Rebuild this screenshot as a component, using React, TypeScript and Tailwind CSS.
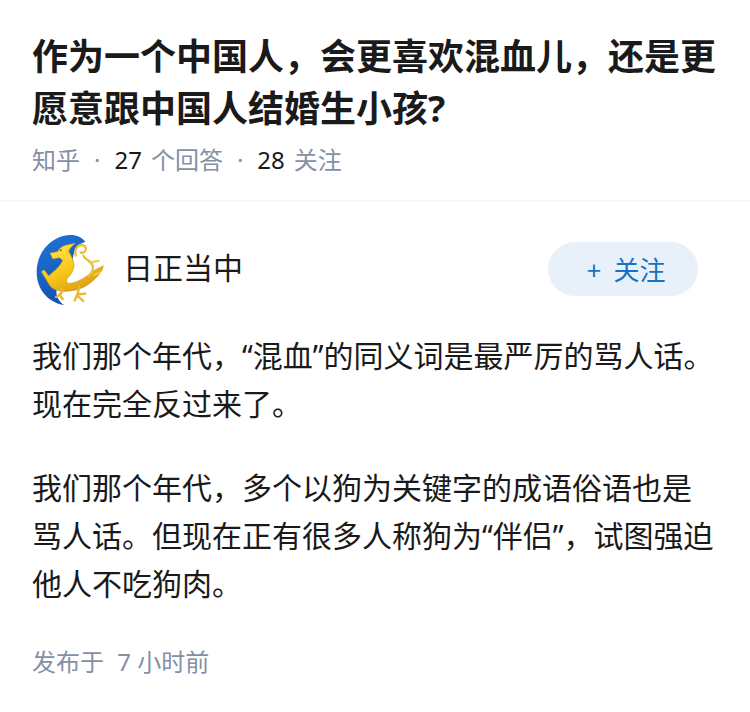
const DragonLogo = () => (
  <svg viewBox="36 27 216 216" className="w-[72px] h-[72px] shrink-0">
    <defs>
      <linearGradient id="gold" x1="0" y1="0" x2="0.6" y2="1">
        <stop offset="0" stopColor="#ffe75a" />
        <stop offset="0.55" stopColor="#fbcb1c" />
        <stop offset="1" stopColor="#dc9f12" />
      </linearGradient>
      <linearGradient id="sea" x1="0.2" y1="0" x2="0.6" y2="1">
        <stop offset="0" stopColor="#1f74d8" />
        <stop offset="1" stopColor="#0f4fae" />
      </linearGradient>
    </defs>
    <path d="M150 30 C172 30 186 38 196 50 C176 56 164 72 160 92 C158 110 150 130 120 170 C100 195 110 225 132 240 C85 232 50 195 50 140 C50 80 95 32 150 30 Z" fill="url(#sea)" />
    <path d="M90 84 L112 80 C118 70 128 62 140 60 L166 54 L152 68 L146 78 L156 98 C170 124 156 146 142 160 C136 170 142 178 156 174 C182 168 206 150 226 134 L250 122 L246 136 L234 152 C216 172 190 194 150 198 C122 202 98 196 88 180 L64 140 L72 134 L86 152 C102 140 122 122 128 106 L118 98 L98 102 Z" fill="url(#gold)" stroke="#b98a1c" strokeWidth="1.5" />
    <path d="M168 92 C160 70 178 55 192 62 C204 70 194 88 182 82 M190 92 C196 108 214 104 218 122 C220 134 214 146 206 152" fill="none" stroke="#e8c23e" strokeWidth="7" strokeLinecap="round" />
    <path d="M125 192 C128 204 118 212 108 216 M118 208 L128 222 M178 184 C176 200 172 212 164 226 M172 208 L196 206 M172 212 L190 228" fill="none" stroke="#e6b92e" strokeWidth="7" strokeLinecap="round" />
    <path d="M208 112 L236 108 M222 150 L240 142" fill="none" stroke="#ecc846" strokeWidth="6" strokeLinecap="round" />
    <circle cx="122" cy="76" r="3" fill="#8a5a10" />
  </svg>
);

export default function App() {
  return (
    <div className="w-[750px] h-[712px] bg-white overflow-hidden font-['Noto_Sans','Noto_Sans_CJK_SC',sans-serif]">
      <header className="px-8 pt-[31px] h-[202px] border-b-2 border-[#f6f6f6]">
        <h1 className="text-[36px] leading-[52px] font-bold text-[#1a1a1a]">
          作为一个中国人，会更喜欢混血儿，还是更愿意跟中国人结婚生小孩?
        </h1>
        <div className="mt-[1px] flex items-center text-[24px] leading-[48px] text-[#8590a6]">
          <span>知乎</span>
          <span className="mx-[14px]">·</span>
          <span className="text-[#1a1a1a]">27</span>
          <span className="ml-[9px]">个回答</span>
          <span className="mx-[14px]">·</span>
          <span className="text-[#1a1a1a]">28</span>
          <span className="ml-[9px]">关注</span>
        </div>
      </header>

      <main className="px-8">
        <div className="mt-[32px] flex items-center">
          <DragonLogo />
          <span className="ml-[19px] flex-1 pb-[4px] text-[30px] leading-[40px] text-[#1a1a1a]">日正当中</span>
          <button className="mr-[20px] mb-[2px] pt-[2px] pl-[6px] w-[150px] h-[54px] rounded-full bg-[#e8f1fa] text-[#1772c6] text-[26px] flex items-center justify-center gap-[12px]">
            <span>+</span>
            <span>关注</span>
          </button>
        </div>

        <div className="mt-[26px] text-[30px] leading-[48px] text-[#1a1a1a]">
          <p>我们那个年代，“混血”的同义词是最严厉的骂人话。现在完全反过来了。</p>
          <p className="mt-[36px]">我们那个年代，多个以狗为关键字的成语俗语也是骂人话。但现在正有很多人称狗为“伴侣”，试图强迫他人不吃狗肉。</p>
        </div>

        <div className="mt-[30px] text-[24px] leading-[48px] text-[#8590a6]">
          发布于 <span className="ml-[7px]">7 小时前</span>
        </div>
      </main>
    </div>
  );
}
